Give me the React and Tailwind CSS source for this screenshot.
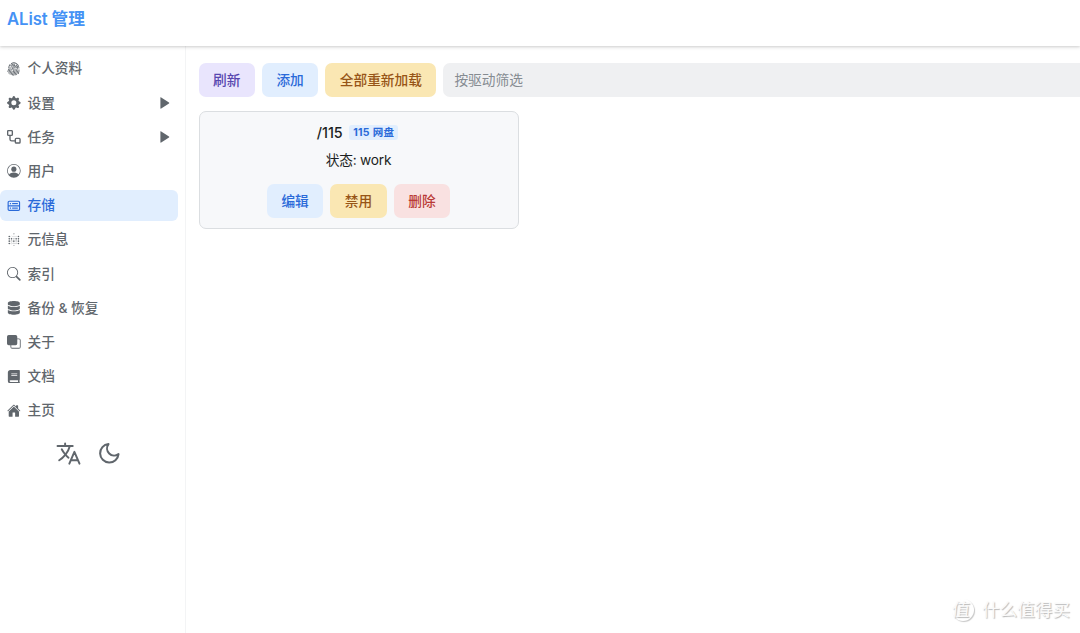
import { BsFingerprint, BsGearFill, BsPersonCircle, BsSearch, BsFront } from "react-icons/bs";
import { CgDatabase } from "react-icons/cg";
import { SiMetabase } from "react-icons/si";
import { FaDatabase, FaBook } from "react-icons/fa";
import { IoHome, IoLanguageOutline } from "react-icons/io5";
import { FiMoon } from "react-icons/fi";

function Workflow({ className }) {
  return (
    <svg className={className} viewBox="0 0 16 16" fill="none" stroke="currentColor" strokeWidth="1.6">
      <rect x="0.75" y="0.75" width="5.5" height="5.5" rx="1" />
      <rect x="9.75" y="9.75" width="5.5" height="5.5" rx="1" />
      <path d="M3.5 6.25v4.5a2 2 0 0 0 2 2h4.25" />
    </svg>
  );
}

const items = [
  { label: "个人资料", icon: BsFingerprint },
  { label: "设置", icon: BsGearFill, sub: true },
  { label: "任务", icon: Workflow, sub: true },
  { label: "用户", icon: BsPersonCircle },
  { label: "存储", icon: CgDatabase, active: true },
  { label: "元信息", icon: SiMetabase },
  { label: "索引", icon: BsSearch },
  { label: "备份 & 恢复", icon: FaDatabase },
  { label: "关于", icon: BsFront },
  { label: "文档", icon: FaBook },
  { label: "主页", icon: IoHome },
];

const tones = {
  violet: "bg-[#e9e5fd] text-[#5746af]",
  blue: "bg-[#e1eefe] text-[#2a6ad9]",
  amber: "bg-[#fae7b3] text-[#975517]",
  red: "bg-[#f9e1e1] text-[#b93a36]",
};

function Button({ tone, children }) {
  return (
    <button className={`flex h-[34px] shrink-0 items-center justify-center rounded-[7px] px-[14.5px] text-[13.7px] font-medium ${tones[tone]}`}>
      {children}
    </button>
  );
}

function Item({ label, icon: Icon, sub, active }) {
  return (
    <a className={`flex h-[30.8px] w-[178px] items-center rounded-[6px] pl-[7px] pr-[8px] ${active ? "bg-[#e1eefe] text-[#2a6ad9]" : "text-[#60666c]"}`}>
      <Icon className="size-[13.7px] shrink-0" />
      <span className="ml-[6.8px] text-[13.7px] font-medium whitespace-pre">{label}</span>
      {sub && (
        <svg className="ml-auto h-3 w-[10px]" viewBox="0 0 10 12" fill="currentColor">
          <path d="M0.4 0.7v10.6c0 .5.4.6.8.3L9 6.5c.4-.3.4-.7 0-1L1.2.4C.8.1.4.2.4.7z" />
        </svg>
      )}
    </a>
  );
}

export default function App() {
  return (
    <div className="relative flex h-[633px] w-[1080px] flex-col overflow-hidden bg-white font-['Inter','Noto_Sans_CJK_SC',sans-serif] text-[#1c1f22]">
      <header className="z-10 flex h-[46px] shrink-0 items-start bg-white pl-[7px] pt-[7px] shadow-[0_1px_4px_rgba(0,0,0,0.14),0_1px_2px_rgba(0,0,0,0.08)]">
        <h1 className="text-[16.7px] leading-6 font-semibold tracking-[-0.1px] text-[#4592f5]">AList 管理</h1>
      </header>
      <div className="flex min-h-0 flex-1">
        <aside className="w-[186px] shrink-0 border-r border-[#f3f4f5] pt-[7.3px]">
          <nav className="flex flex-col gap-[3.4px]">
            {items.map((item) => (
              <Item key={item.label} {...item} />
            ))}
          </nav>
          <div className="mt-[14px] flex items-center justify-center gap-[15px] pr-[8px] text-[#60666c]">
            <IoLanguageOutline className="size-[27px] [&_path]:[stroke-width:37px]" />
            <FiMoon className="size-[24.6px]" />
          </div>
        </aside>
        <main className="min-w-0 flex-1 pl-[12.5px] pt-[17.4px]">
          <div className="flex gap-[7px]">
            <Button tone="violet">刷新</Button>
            <Button tone="blue">添加</Button>
            <Button tone="amber">全部重新加载</Button>
            <div className="flex h-[34px] flex-1 items-center rounded-l-[7px] bg-[#eff0f2] pl-[11px] text-[13.7px] text-[#858b91]">按驱动筛选</div>
          </div>
          <section className="mt-[13.6px] flex h-[118px] w-[320px] flex-col items-center rounded-[7px] border border-[#dbdee1] bg-[#f7f8fa] pt-[11px]">
            <div className="flex h-5 items-center gap-[6.5px] pr-[2px]">
              <span className="text-[14.3px] font-medium">/115</span>
              <span className="flex h-[15px] items-center rounded-[3px] bg-[#e1eefe] px-[4px] text-[10.5px] font-bold tracking-[0.3px] text-[#2a6ad9]">115 网盘</span>
            </div>
            <p className="mt-[7px] text-[13.7px] leading-5 tracking-[-0.2px]">状态: work</p>
            <div className="mt-[14px] flex gap-[7px]">
              <Button tone="blue">编辑</Button>
              <Button tone="amber">禁用</Button>
              <Button tone="red">删除</Button>
            </div>
          </section>
        </main>
      </div>
      <div className="absolute right-[10px] bottom-[11px] flex items-center gap-[8px] text-[#fafafa] [text-shadow:1px_1px_1px_rgba(0,0,0,0.28)]">
        <span className="flex size-[22px] items-center justify-center rounded-full text-[18px] shadow-[1px_1px_1px_rgba(0,0,0,0.22)]">
          <span className="-skew-x-6 -translate-x-[2px] -translate-y-px">值</span>
        </span>
        <span className="text-[17.6px] leading-6">什么值得买</span>
      </div>
    </div>
  );
}
